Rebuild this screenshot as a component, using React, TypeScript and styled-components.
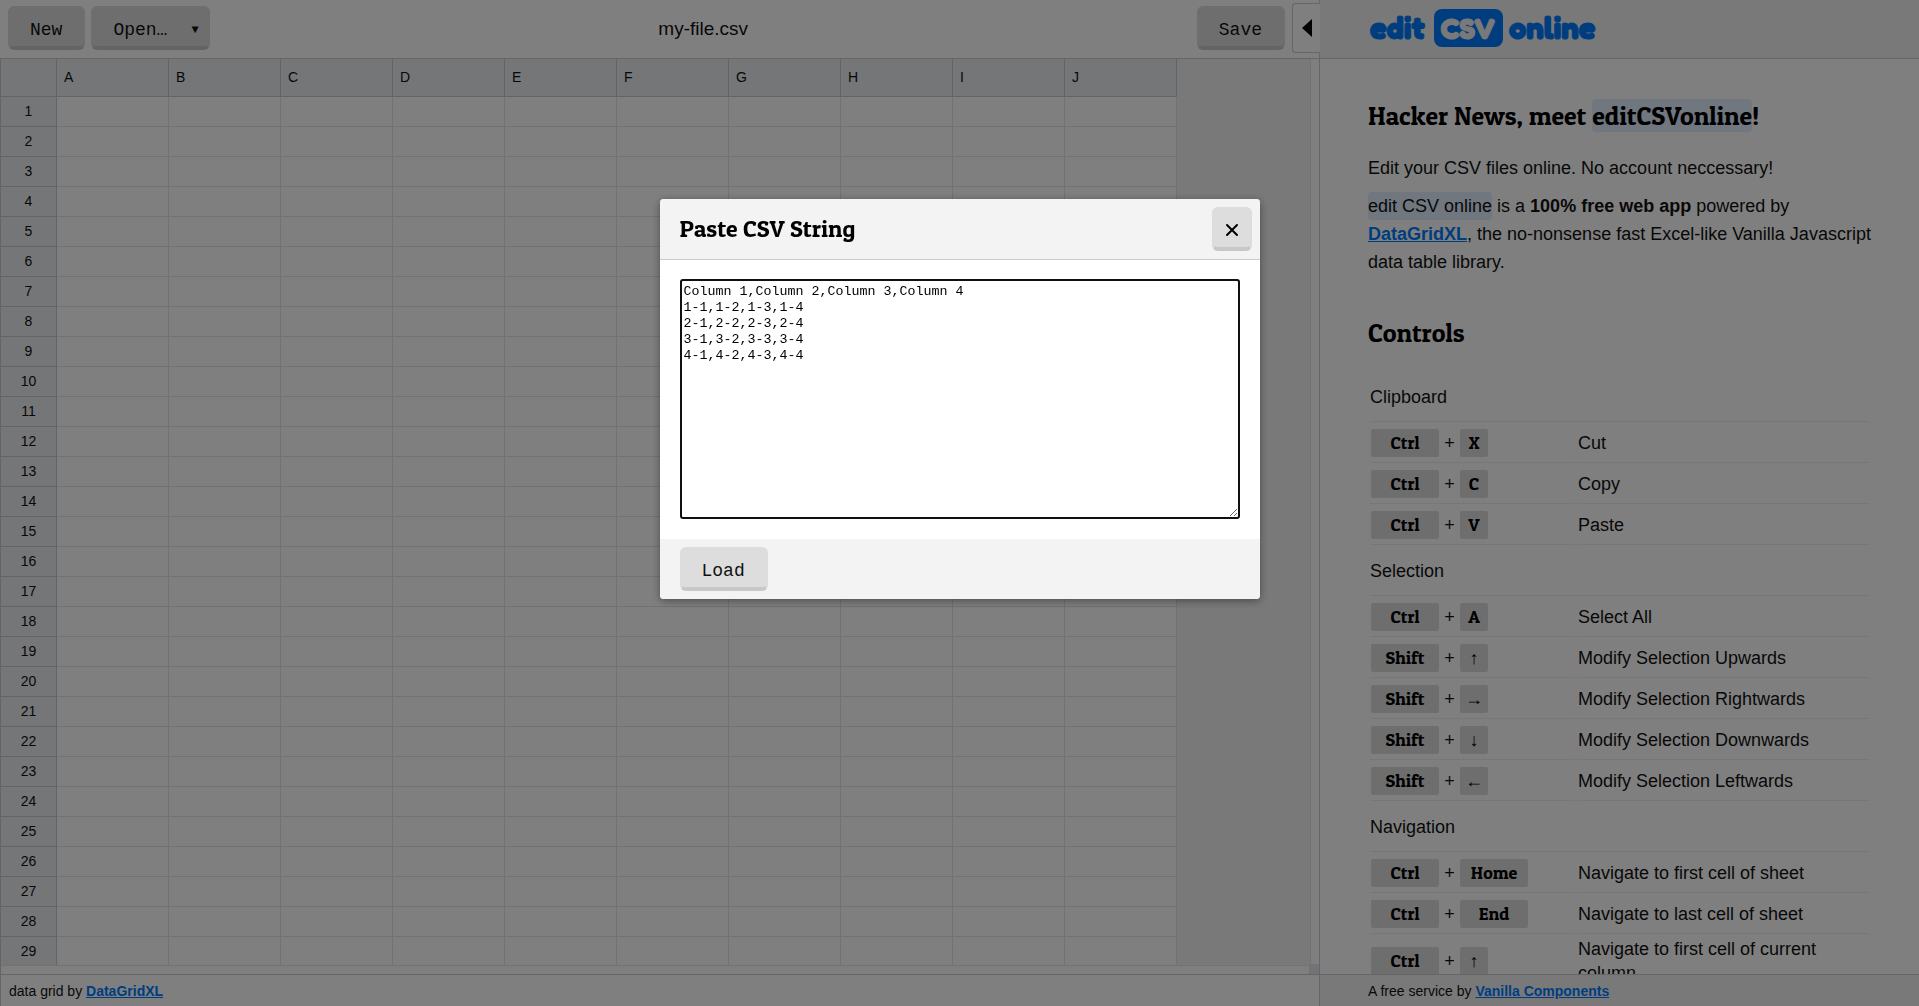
import React from "react";
import styled, { createGlobalStyle } from "styled-components";

const sans = `"Liberation Sans", Arial, Helvetica, sans-serif`;
const mono = `"Liberation Mono", "Courier New", monospace`;
const slab = `"Patua One", "Liberation Serif", "Times New Roman", serif`;
const line = "#cccccc";
const headLine = "#c6c8cb";
const cellLine = "#e4e4e4";
const panel = "#f3f3f3";
const blue = "#007bff";

const GlobalStyle = createGlobalStyle`
  *, *::before, *::after { box-sizing: border-box; }
  body {
    margin: 0;
    font: 18px/28px ${sans};
    color: #111;
    background: #fff;
    overflow: hidden;
  }
`;

const Page = styled.div`
  display: flex;
  height: 100vh;
`;

const Main = styled.main`
  flex: 1;
  min-width: 0;
  display: flex;
  flex-direction: column;
`;

const Toolbar = styled.header`
  flex: none;
  display: flex;
  align-items: center;
  gap: 6px;
  height: 59px;
  padding: 0 0 2px 8px;
  border-bottom: 1px solid ${line};
`;

const Button = styled.button<{ $square?: boolean }>`
  display: inline-flex;
  align-items: center;
  justify-content: center;
  height: 44px;
  padding: ${(p) => (p.$square ? "4px 0 0" : "6px 21px 0 20px")};
  ${(p) => p.$square && "width: 40px;"}
  border: 2px solid #ddd;
  border-bottom: 4px solid #c8c8c8;
  border-radius: 6px;
  background: #ddd;
  color: #111;
  font: 18px/24px ${mono};
  cursor: pointer;
`;

const MenuButton = styled(Button)`
  gap: 24px;
  padding-right: 9px;
`;

const Caret = styled.span`
  font-size: 12px;
`;

const FileName = styled.span`
  flex: 1;
  padding-top: 2px;
  text-align: center;
  font-size: 19px;
`;

const CollapseTab = styled.button`
  position: relative;
  z-index: 1;
  display: flex;
  align-items: center;
  justify-content: center;
  width: 28px;
  height: 50px;
  margin: 0 -1px 0 1px;
  padding: 0;
  border: 1px solid ${line};
  border-right: 0;
  border-radius: 4px 0 0 4px;
  background: #fff;
  cursor: pointer;
`;

const GridArea = styled.div`
  flex: 1;
  min-height: 0;
  display: grid;
  grid-template: minmax(0, 1fr) 8px / minmax(0, 1fr) 8px;
  border-left: 1px solid ${headLine};
`;

const Viewport = styled.div`
  grid-area: 1 / 1;
  overflow: hidden;
  background: ${panel};
  border-right: 1px solid ${cellLine};
  border-bottom: 1px solid ${cellLine};
`;

const ScrollCorner = styled.div`
  grid-area: 1 / 1 / 3 / 3;
  place-self: end;
  width: 10px;
  height: 10px;
  background: #e4e7ec;
`;

const Sheet = styled.table`
  table-layout: fixed;
  width: 1176px;
  border-collapse: separate;
  border-spacing: 0;
  font-size: 14px;
  line-height: 20px;

  th,
  td {
    padding: 0 0 2px;
    border-right: 1px solid ${cellLine};
    border-bottom: 1px solid ${cellLine};
    font-weight: normal;
    background: #fff;
  }
  tr {
    height: 30px;
  }
`;

const ColHead = styled.th`
  && {
    width: 112px;
    height: 38px;
    padding-left: 7px;
    text-align: left;
    border-color: ${headLine};
    background: #e9ecf0;
  }
`;

const CornerHead = styled.td`
  && {
    width: 56px;
    border-color: ${headLine};
    background: #e9ecf0;
  }
`;

const RowHead = styled.th`
  && {
    text-align: center;
    border-color: ${headLine};
    background: #e9ecf0;
  }
`;

const Footer = styled.footer<{ $side?: boolean }>`
  flex: none;
  height: 32px;
  padding: ${(p) => (p.$side ? "0 48px" : "0 8px")};
  border-top: 1px solid ${line};
  border-left: ${(p) => (p.$side ? "0" : `1px solid ${line}`)};
  background: ${(p) => (p.$side ? panel : "#fff")};
  font-size: 14px;
  line-height: 32px;
`;

const Link = styled.a`
  color: ${blue};
  font-weight: bold;
  text-decoration: underline;
`;

const Aside = styled.aside`
  flex: none;
  width: 600px;
  display: flex;
  flex-direction: column;
  border-left: 1px solid ${line};
`;

const Brand = styled.header`
  flex: none;
  height: 59px;
  padding: 0 48px;
  background: ${panel};
  border-bottom: 1px solid ${line};
`;

const Help = styled.div`
  flex: 1;
  min-height: 0;
  overflow-y: auto;
  scrollbar-width: none;
  padding: 40px 48px 0;
`;

const Heading = styled.h2`
  margin: 0 0 22px;
  font: normal 26px/33px ${slab};
  color: #000;
`;

const Section = styled.section`
  margin-bottom: 40px;
`;

const Para = styled.p`
  margin: 0 0 10px;
`;

const Mark = styled.span`
  display: inline-block;
  border-radius: 4px;
  background: #e0eeff;
`;

const Shortcuts = styled.table`
  table-layout: fixed;
  width: 100%;
  border-collapse: separate;
  border-spacing: 2px;
  line-height: 24px;

  th,
  td {
    border-bottom: 1px solid #eee;
    font-weight: normal;
    text-align: left;
    vertical-align: middle;
  }
  td {
    padding: 1px;
  }
`;

const KeyCol = styled.col`
  width: 205px;
`;

const GroupCell = styled.th`
  height: 49px;
  padding: 0;
`;

const Keys = styled.div`
  display: flex;
  align-items: center;
  padding: 4px 0;
`;

const Key = styled.kbd<{ $wide?: boolean }>`
  width: ${(p) => (p.$wide ? "68px" : "28px")};
  height: 28px;
  border-radius: 2px;
  background: #ddd;
  color: #000;
  font: normal 18px/28px ${slab};
  text-align: center;
`;

const Plus = styled.span`
  width: 21px;
  text-align: center;
`;

const Backdrop = styled.div`
  position: fixed;
  inset: 0;
  z-index: 10;
  display: flex;
  justify-content: center;
  align-items: flex-start;
  padding-top: 199px;
  background: rgba(0, 0, 0, 0.5);
`;

const Dialog = styled.div`
  width: 600px;
  overflow: hidden;
  border-radius: 4px;
  background: #fff;
  box-shadow: 0 2px 8px rgba(0, 0, 0, 0.4);
`;

const DialogHead = styled.div`
  display: flex;
  align-items: center;
  justify-content: space-between;
  height: 60px;
  padding: 0 8px 0 20px;
  background: ${panel};
  box-shadow: 0 1px 0 ${line};
`;

const DialogTitle = styled.h3`
  margin: 0;
  font: normal 24px/32px ${slab};
  color: #000;
`;

const DialogBody = styled.div`
  display: flex;
  padding: 20px;
`;

const CsvInput = styled.textarea`
  flex: 1;
  height: 240px;
  padding: 3px 2px;
  border: 2px solid #101010;
  border-radius: 3px;
  outline: 0;
  font-family: ${mono};
  line-height: 16px;
  color: #000;
`;

const DialogFoot = styled.div`
  display: flex;
  align-items: center;
  height: 60px;
  padding: 0 20px;
  background: ${panel};
`;

const columns = "ABCDEFGHIJ".split("");
const rows = Array.from({ length: 29 }, (_, i) => i + 1);

const groups = [
  {
    name: "Clipboard",
    items: [
      ["Ctrl", "X", "Cut"],
      ["Ctrl", "C", "Copy"],
      ["Ctrl", "V", "Paste"],
    ],
  },
  {
    name: "Selection",
    items: [
      ["Ctrl", "A", "Select All"],
      ["Shift", "↑", "Modify Selection Upwards"],
      ["Shift", "→", "Modify Selection Rightwards"],
      ["Shift", "↓", "Modify Selection Downwards"],
      ["Shift", "←", "Modify Selection Leftwards"],
    ],
  },
  {
    name: "Navigation",
    items: [
      ["Ctrl", "Home", "Navigate to first cell of sheet"],
      ["Ctrl", "End", "Navigate to last cell of sheet"],
      ["Ctrl", "↑", "Navigate to first cell of current column"],
    ],
  },
];

const csv = `Column 1,Column 2,Column 3,Column 4
1-1,1-2,1-3,1-4
2-1,2-2,2-3,2-4
3-1,3-2,3-3,3-4
4-1,4-2,4-3,4-4`;

function Logo() {
  return (
    <svg width="232" height="58" role="img" aria-label="edit CSV online">
      <rect x="66" y="9" width="69" height="38" rx="8" fill={blue} />
      <g
        fontFamily="'Fredoka One', Fredoka, Lato, sans-serif"
        fontWeight="700"
        fontSize="31"
        strokeWidth="1"
        strokeLinejoin="round"
        fill={blue}
        stroke={blue}
      >
        <text x="2" y="39">edit</text>
        <text x="100" y="39" fontSize="29" textAnchor="middle" fill={panel} stroke={panel}>
          CSV
        </text>
        <text x="141" y="39">online</text>
      </g>
    </svg>
  );
}

function KeyCap({ label }: { label: string }) {
  return <Key $wide={label.length > 1}>{label}</Key>;
}

export default function App() {
  return (
    <>
      <GlobalStyle />
      <Page>
        <Main>
          <Toolbar>
            <Button>New</Button>
            <MenuButton aria-haspopup="menu">
              Open… <Caret>▼</Caret>
            </MenuButton>
            <FileName>my-file.csv</FileName>
            <Button>Save</Button>
            <CollapseTab aria-label="Toggle sidebar">
              <svg width="10" height="18" viewBox="0 0 10 18">
                <path d="M10 0v18L0 9z" fill="#000" />
              </svg>
            </CollapseTab>
          </Toolbar>
          <GridArea>
            <Viewport>
              <Sheet>
                <thead>
                  <tr>
                    <CornerHead />
                    {columns.map((c) => (
                      <ColHead key={c} scope="col">{c}</ColHead>
                    ))}
                  </tr>
                </thead>
                <tbody>
                  {rows.map((r) => (
                    <tr key={r}>
                      <RowHead scope="row">{r}</RowHead>
                      {columns.map((c) => (
                        <td key={c} />
                      ))}
                    </tr>
                  ))}
                </tbody>
              </Sheet>
            </Viewport>
            <ScrollCorner />
          </GridArea>
          <Footer>
            data grid by <Link href="#datagridxl">DataGridXL</Link>
          </Footer>
        </Main>

        <Aside>
          <Brand>
            <Logo />
          </Brand>
          <Help>
            <Section>
              <Heading>
                Hacker News, meet <Mark>editCSVonline</Mark>!
              </Heading>
              <Para>Edit your CSV files online. No account neccessary!</Para>
              <Para>
                <Mark>edit CSV online</Mark> is a <b>100% free web app</b> powered by{" "}
                <Link href="#datagridxl">DataGridXL</Link>, the no-nonsense fast Excel-like
                Vanilla Javascript data table library.
              </Para>
            </Section>
            <Heading>Controls</Heading>
            <Shortcuts>
              <colgroup>
                <KeyCol />
                <col />
              </colgroup>
              {groups.map((g) => (
                <tbody key={g.name}>
                  <tr>
                    <GroupCell colSpan={2}>{g.name}</GroupCell>
                  </tr>
                  {g.items.map(([mod, key, text]) => (
                    <tr key={text}>
                      <td>
                        <Keys>
                          <KeyCap label={mod} />
                          <Plus>+</Plus>
                          <KeyCap label={key} />
                        </Keys>
                      </td>
                      <td>{text}</td>
                    </tr>
                  ))}
                </tbody>
              ))}
            </Shortcuts>
          </Help>
          <Footer $side>
            A free service by <Link href="#vanilla">Vanilla Components</Link>
          </Footer>
        </Aside>
      </Page>

      <Backdrop>
        <Dialog role="dialog" aria-modal="true" aria-labelledby="paste-title">
          <DialogHead>
            <DialogTitle id="paste-title">Paste CSV String</DialogTitle>
            <Button $square aria-label="Close">
              <svg width="14" height="14" viewBox="0 0 14 14">
                <path d="M2 2l10 10M12 2L2 12" stroke="#000" strokeWidth="2" strokeLinecap="round" />
              </svg>
            </Button>
          </DialogHead>
          <DialogBody>
            <CsvInput aria-labelledby="paste-title" defaultValue={csv} spellCheck={false} />
          </DialogBody>
          <DialogFoot>
            <Button>Load</Button>
          </DialogFoot>
        </Dialog>
      </Backdrop>
    </>
  );
}
